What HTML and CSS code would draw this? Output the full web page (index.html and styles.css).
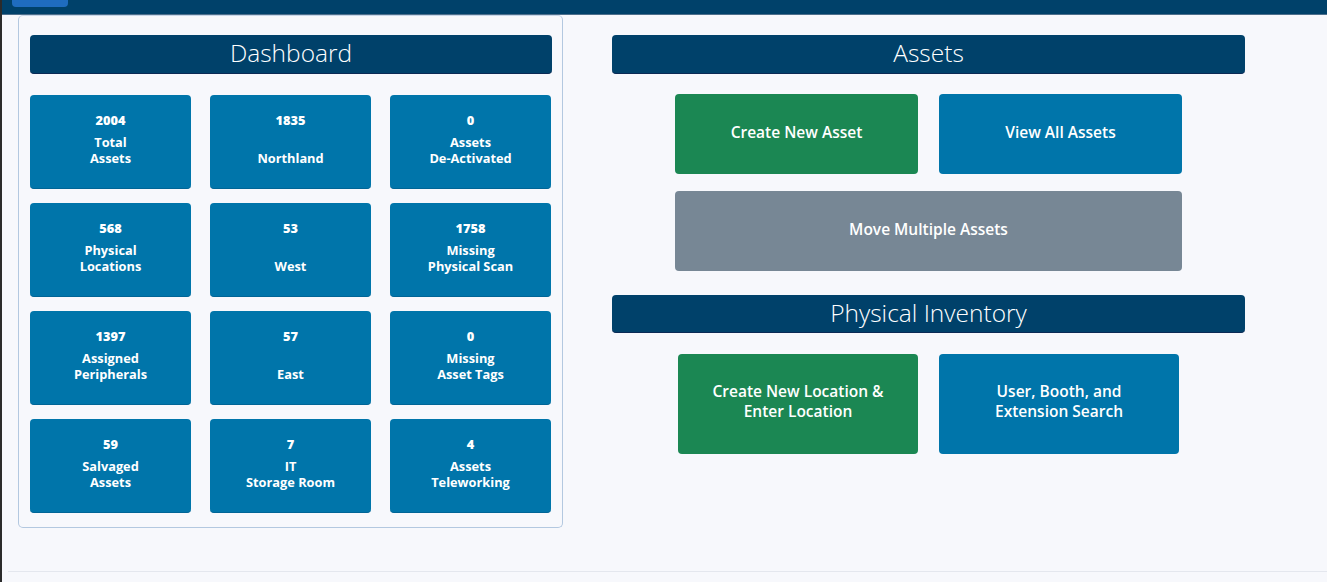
FILE: index.html
```html
<!DOCTYPE html>
<html>
<head>
<meta charset="utf-8">
<link rel="stylesheet" href="styles.css">
</head>
<body>
<div class="app">
  <div class="edge"></div>
  <div class="page">
    <nav class="navbar"><span class="nav-btn"></span></nav>
    <main class="main">
      <section class="dash-card">
        <h2 class="band">Dashboard</h2>
        <div class="tiles">
          <div class="tile"><b>2004</b><span>Total<br>Assets</span></div>
          <div class="tile"><b>1835</b><span><br>Northland</span></div>
          <div class="tile"><b>0</b><span>Assets<br>De-Activated</span></div>
          <div class="tile"><b>568</b><span>Physical<br>Locations</span></div>
          <div class="tile"><b>53</b><span><br>West</span></div>
          <div class="tile"><b>1758</b><span>Missing<br>Physical Scan</span></div>
          <div class="tile"><b>1397</b><span>Assigned<br>Peripherals</span></div>
          <div class="tile"><b>57</b><span><br>East</span></div>
          <div class="tile"><b>0</b><span>Missing<br>Asset Tags</span></div>
          <div class="tile"><b>59</b><span>Salvaged<br>Assets</span></div>
          <div class="tile"><b>7</b><span>IT<br>Storage Room</span></div>
          <div class="tile"><b>4</b><span>Assets<br>Teleworking</span></div>
        </div>
      </section>
      <section class="actions">
        <h2 class="band">Assets</h2>
        <div class="btn-grid assets-grid">
          <a class="btn green">Create New Asset</a>
          <a class="btn blue">View All Assets</a>
          <a class="btn gray wide">Move Multiple Assets</a>
        </div>
        <h2 class="band band-pi">Physical Inventory</h2>
        <div class="btn-grid pi-grid">
          <a class="btn green tall">Create New Location &amp;<br>Enter Location</a>
          <a class="btn blue tall">User, Booth, and<br>Extension Search</a>
        </div>
      </section>
    </main>
    <footer class="footer"></footer>
  </div>
</div>
</body>
</html>
```

FILE: styles.css
```css
* { box-sizing: border-box; }
html, body { margin: 0; padding: 0; }
body {
  background: #f7f8fc;
  font-family: "Open Sans", "Noto Sans", sans-serif;
  height: 582px;
  overflow: hidden;
}
.app { display: flex; height: 582px; }
.edge { width: 2px; background: #2b2b2b; flex: none; }
.page { flex: 1; display: flex; flex-direction: column; }
.navbar {
  height: 15px;
  background: #00416a;
  border-bottom: 1px solid #4d6f8c;
  padding-left: 10px;
  flex: none;
}
.nav-btn {
  display: block;
  width: 56px;
  height: 7px;
  background: #1f6cbf;
  border-radius: 0 0 4px 4px;
}
.main {
  display: flex;
  padding-left: 16px;
  height: 556px;
  flex: none;
}
.dash-card {
  width: 545px;
  height: 513px;
  border: 1px solid #b3c8e0;
  border-top-color: #c8d6e8;
  border-radius: 5px;
  padding: 19px 10px 0 11px;
}
.band {
  margin: 0;
  background: #00416a;
  color: #fff;
  border-radius: 4px;
  border-bottom: 1px solid #0b2a55;
  text-align: center;
  font-weight: 300;
  font-size: 24.5px;
  height: 39px;
  line-height: 36px;
}
.tiles {
  margin-top: 21px;
  display: grid;
  grid-template-columns: 161px 161px 161px;
  column-gap: 19px;
  row-gap: 14px;
}
.tile {
  height: 94px;
  background: #0075aa;
  border-radius: 4px;
  border-bottom: 1px solid #006596;
  color: #fff;
  display: flex;
  flex-direction: column;
  align-items: center;
  padding-top: 17px;
  font-size: 12.8px;
  font-weight: 700;
  line-height: 16px;
  text-align: center;
}
.tile b { display: block; margin-bottom: 6px; }
.actions {
  margin-left: 49px;
  width: 633px;
  padding-top: 20px;
}
.btn-grid {
  display: grid;
  justify-content: center;
  column-gap: 21px;
}
.assets-grid {
  margin-top: 20px;
  grid-template-columns: 243px 243px;
  row-gap: 17px;
}
.pi-grid {
  margin-top: 21px;
  grid-template-columns: 240px 240px;
}
.band-pi { margin-top: 24px; height: 38px; }
.btn {
  display: flex;
  align-items: center;
  justify-content: center;
  text-align: center;
  height: 80px;
  padding-bottom: 5px;
  border-radius: 4px;
  color: #fff;
  font-weight: 600;
  font-size: 15.5px;
  line-height: 20px;
}
.btn.wide { grid-column: 1 / 3; }
.btn.tall { height: 100px; padding-bottom: 6px; }
.green { background: #1b8753; }
.blue { background: #0075aa; }
.gray { background: #778795; }
.footer {
  margin: 0 0 0 6px;
  border-top: 1px solid #e4e7ee;
  height: 11px;
}
```
